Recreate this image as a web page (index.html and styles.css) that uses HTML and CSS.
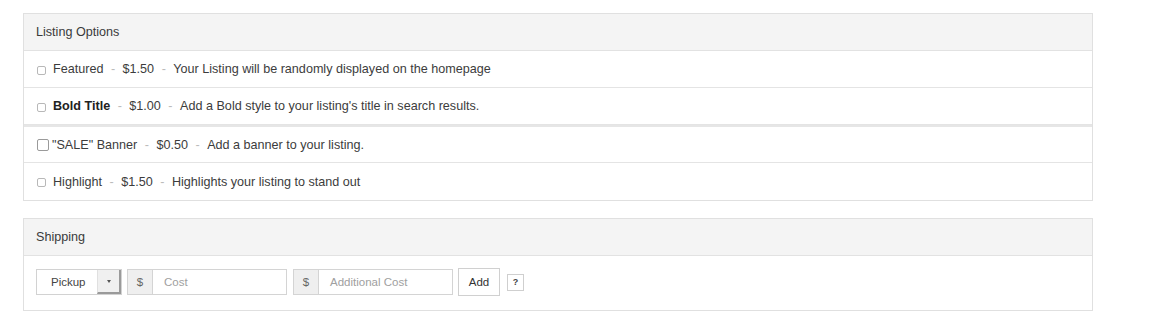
FILE: index.html
```html
<!DOCTYPE html>
<html>
<head>
<meta charset="utf-8">
<link rel="stylesheet" href="styles.css">
</head>
<body>
<div class="page">
  <div class="panel">
    <div class="panel-heading">Listing Options</div>
    <div class="option"><span class="cb"></span><span class="name">Featured</span><span class="sep">-</span><span>$1.50</span><span class="sep">-</span><span>Your Listing will be randomly displayed on the homepage</span></div>
    <div class="option"><span class="cb"></span><span class="name bold">Bold Title</span><span class="sep">-</span><span>$1.00</span><span class="sep">-</span><span>Add a Bold style to your listing's title in search results.</span></div>
    <div class="option thick"><span class="cb big"></span><span class="name">"SALE" Banner</span><span class="sep">-</span><span>$0.50</span><span class="sep">-</span><span>Add a banner to your listing.</span></div>
    <div class="option last"><span class="cb"></span><span class="name">Highlight</span><span class="sep">-</span><span>$1.50</span><span class="sep">-</span><span>Highlights your listing to stand out</span></div>
  </div>
  <div class="panel">
    <div class="panel-heading">Shipping</div>
    <div class="ship-body">
      <div class="dropdown"><span class="dd-label">Pickup</span><span class="dd-btn"><span class="caret"></span></span></div>
      <div class="group"><span class="addon">$</span><span class="field">Cost</span></div>
      <div class="group"><span class="addon">$</span><span class="field">Additional Cost</span></div>
      <button class="btn">Add</button>
      <span class="help">?</span>
    </div>
  </div>
</div>
</body>
</html>
```

FILE: styles.css
```css
* { box-sizing: border-box; }
html, body { margin: 0; padding: 0; background: #fff; }
body {
  font-family: "Liberation Sans", Arial, Helvetica, sans-serif;
  font-size: 12.6px;
  color: #333;
}
.page {
  padding: 13px 0 0 23px;
  width: 1093px;
  display: flex;
  flex-direction: column;
  gap: 17px;
}
.panel {
  border: 1px solid #e0e0e0;
  background: #fff;
}
.panel-heading {
  height: 37px;
  background: #f4f4f4;
  border-bottom: 1px solid #e2e2e2;
  display: flex;
  align-items: center;
  padding-left: 12px;
  color: #3a3a3a;
}
.option {
  height: 37px;
  border-bottom: 1px solid #e4e4e4;
  display: flex;
  align-items: center;
  padding-left: 13px;
  color: #3c3c3c;
}
.option.thick { border-top: 2px solid #e6e6e6; height: 38px; }
.option.last { border-bottom: none; height: 37px; }
.cb {
  width: 9px;
  height: 9px;
  border: 1px solid #b8b8b8;
  border-radius: 2px;
  background: #fff;
  margin-right: 7px;
  margin-top: 2px;
}
.cb.big {
  width: 12px;
  height: 12px;
  margin-right: 3px;
  margin-top: 0;
  border-color: #9a9a9a;
}
.name.bold { font-weight: bold; color: #222; }
.sep { color: #bbb; padding: 0 7.5px; }
.ship-body {
  height: 54px;
  display: flex;
  align-items: center;
  padding: 0 0 2px 12px;
  font-size: 11.5px;
}
.dropdown {
  width: 86px;
  height: 26px;
  border: 1px solid #d2d2d2;
  display: flex;
  margin-right: 5px;
}
.dd-label {
  flex: 1;
  display: flex;
  align-items: center;
  padding-left: 14px;
  color: #444;
}
.dd-btn {
  width: 24px;
  background: #f0f0f0;
  border-left: 1px solid #e0e0e0;
  border-right: 2px solid #9a9a9a;
  border-bottom: 2px solid #9a9a9a;
  display: flex;
  align-items: center;
  justify-content: center;
}
.caret {
  width: 0;
  height: 0;
  border-left: 2px solid transparent;
  border-right: 2px solid transparent;
  border-top: 3px solid #555;
}
.group {
  display: flex;
  height: 26px;
  border: 1px solid #d4d4d4;
  margin-right: 6px;
}
.addon {
  width: 25px;
  background: #efefef;
  border-right: 1px solid #d4d4d4;
  display: flex;
  align-items: center;
  justify-content: center;
  color: #666;
}
.field {
  width: 133px;
  display: flex;
  align-items: center;
  padding-left: 11px;
  color: #a0a0a0;
}
.btn {
  font: inherit;
  width: 42px;
  height: 28px;
  border: 1px solid #d0d0d0;
  background: #fff;
  color: #333;
  padding: 0;
  margin-left: -1px;
  margin-right: 7px;
}
.help {
  width: 17px;
  height: 17px;
  border: 1px solid #cfcfcf;
  display: flex;
  align-items: center;
  justify-content: center;
  font-size: 9px;
  font-weight: bold;
  color: #444;
}
```
